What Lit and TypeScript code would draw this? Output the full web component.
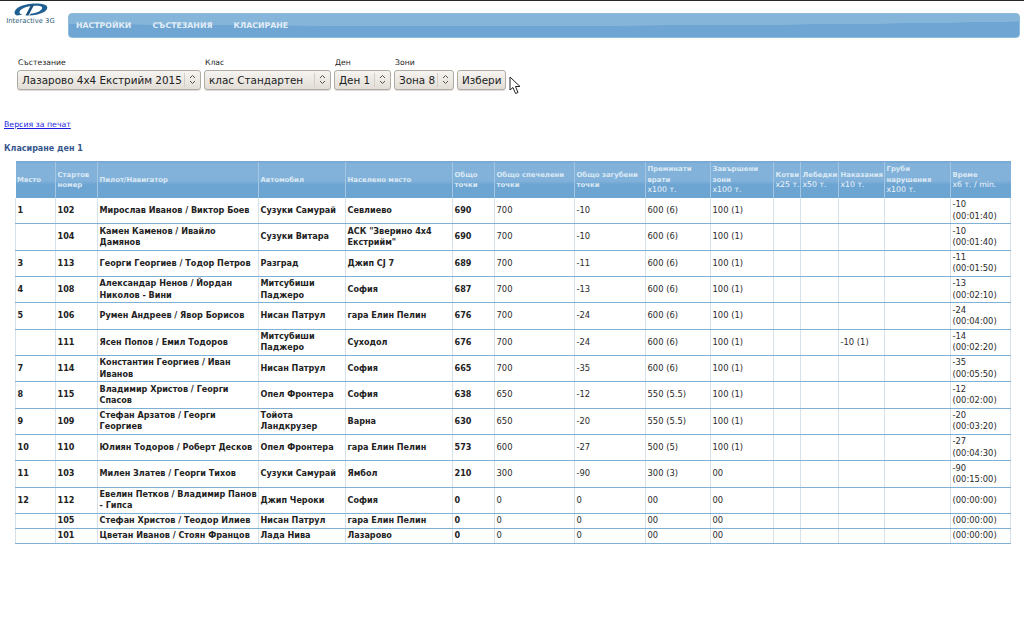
import { LitElement, html, css, svg } from "lit";
import { customElement } from "lit/decorators.js";

type Row = [string, string, string, string, string, string, string, string, string, string, string, string, string, string, string];

const rows: Row[] = [
  ["1", "102", "Мирослав Иванов / Виктор Боев", "Сузуки Самурай", "Севлиево", "690", "700", "-10", "600 (6)", "100 (1)", "", "", "", "", "-10 (00:01:40)"],
  ["", "104", "Камен Каменов / Ивайло Дамянов", "Сузуки Витара", 'АСК "Зверино 4х4 Екстрийм"', "690", "700", "-10", "600 (6)", "100 (1)", "", "", "", "", "-10 (00:01:40)"],
  ["3", "113", "Георги Георгиев / Тодор Петров", "Разград", "Джип CJ 7", "689", "700", "-11", "600 (6)", "100 (1)", "", "", "", "", "-11 (00:01:50)"],
  ["4", "108", "Александар Ненов / Йордан Николов - Вини", "Митсубиши Паджеро", "София", "687", "700", "-13", "600 (6)", "100 (1)", "", "", "", "", "-13 (00:02:10)"],
  ["5", "106", "Румен Андреев / Явор Борисов", "Нисан Патрул", "гара Елин Пелин", "676", "700", "-24", "600 (6)", "100 (1)", "", "", "", "", "-24 (00:04:00)"],
  ["", "111", "Ясен Попов / Емил Тодоров", "Митсубиши Паджеро", "Суходол", "676", "700", "-24", "600 (6)", "100 (1)", "", "", "-10 (1)", "", "-14 (00:02:20)"],
  ["7", "114", "Константин Георгиев / Иван Иванов", "Нисан Патрул", "София", "665", "700", "-35", "600 (6)", "100 (1)", "", "", "", "", "-35 (00:05:50)"],
  ["8", "115", "Владимир Христов / Георги Спасов", "Опел Фронтера", "София", "638", "650", "-12", "550 (5.5)", "100 (1)", "", "", "", "", "-12 (00:02:00)"],
  ["9", "109", "Стефан Арзатов / Георги Георгиев", "Тойота Ландкрузер", "Варна", "630", "650", "-20", "550 (5.5)", "100 (1)", "", "", "", "", "-20 (00:03:20)"],
  ["10", "110", "Юлиян Тодоров / Роберт Десков", "Опел Фронтера", "гара Елин Пелин", "573", "600", "-27", "500 (5)", "100 (1)", "", "", "", "", "-27 (00:04:30)"],
  ["11", "103", "Милен Златев / Георги Тихов", "Сузуки Самурай", "Ямбол", "210", "300", "-90", "300 (3)", "00", "", "", "", "", "-90 (00:15:00)"],
  ["12", "112", "Евелин Петков / Владимир Панов - Гипса", "Джип Чероки", "София", "0", "0", "0", "00", "00", "", "", "", "", "(00:00:00)"],
  ["", "105", "Стефан Христов / Теодор Илиев", "Нисан Патрул", "гара Елин Пелин", "0", "0", "0", "00", "00", "", "", "", "", "(00:00:00)"],
  ["", "101", "Цветан Иванов / Стоян Францов", "Лада Нива", "Лазарово", "0", "0", "0", "00", "00", "", "", "", "", "(00:00:00)"],
];

const widths = [40, 42, 161, 87, 107, 42, 80, 71, 65, 63, 27, 38, 46, 66, 60];

const heads: [string, string?][] = [
  ["Място"],
  ["Стартов номер"],
  ["Пилот/Навигатор"],
  ["Автомобил"],
  ["Населено място"],
  ["Общо точки"],
  ["Общо спечелени точки"],
  ["Общо загубени точки"],
  ["Преминати врати", "x100 т."],
  ["Завършени зони", "x100 т."],
  ["Котви", "x25 т."],
  ["Лебедки", "x50 т."],
  ["Наказания", "x10 т."],
  ["Груби нарушения", "x100 т."],
  ["Време", "x6 т. / min."],
];

const chevrons = svg`<svg class="chev" width="7" height="11" viewBox="0 0 7 11" fill="none" stroke="#55534e" stroke-width="1"><path d="M1 4 L3.5 1.5 L6 4"/><path d="M1 7 L3.5 9.5 L6 7"/></svg>`;

@customElement("app-root")
export class AppRoot extends LitElement {
  static styles = css`
    :host {
      display: block;
      width: 1024px;
      height: 640px;
      background: #fff;
      font-family: "DejaVu Sans", Verdana, sans-serif;
      position: relative;
      overflow: hidden;
      border-top: 1px solid #23282b;
      box-sizing: border-box;
    }
    .top {
      display: flex;
      align-items: flex-start;
      height: 37px;
    }
    .logo {
      width: 61px;
      margin-right: 7px;
      height: 30px;
      flex: none;
      display: flex;
      flex-direction: column;
      align-items: center;
    }
    .logo svg {
      display: block;
      margin-top: 2px;
    }
    .logo span {
      font-size: 6.8px;
      line-height: 9px;
      color: #2c5a7a;
      white-space: nowrap;
      margin-top: 1px;
    }
    .nav {
      margin-top: 12px;
      flex: 1;
      margin-right: 4px;
      height: 25px;
      box-sizing: border-box;
      border: 1px solid #8fbbdc;
      border-radius: 4px;
      background:
        radial-gradient(ellipse 75% 12px at 42% 0, #86b5da 0 98%, transparent 100%),
        #6ea5d2;
      display: flex;
      align-items: center;
      gap: 21px;
      padding-left: 7px;
    }
    .nav a {
      color: #e3eef7;
      font-size: 7.8px;
      font-weight: 700;
      text-decoration: none;
    }
    .filters {
      display: flex;
      gap: 3px;
      margin: 20px 0 0 17px;
    }
    .field {
      display: flex;
      flex-direction: column;
      gap: 2px;
    }
    label {
      font-size: 7.7px;
      line-height: 10px;
      color: #222;
      padding-left: 1px;
    }
    .sel {
      position: relative;
      height: 20px;
      display: block;
    }
    select,
    button {
      appearance: none;
      height: 20px;
      box-sizing: border-box;
      margin: 0;
      border: 1px solid #b0aca3;
      border-radius: 3px;
      background: linear-gradient(#f6f4f1, #e2ddd6);
      box-shadow: 0 1px 0 #dedcd8;
      color: #222;
      font-family: "DejaVu Sans", Verdana, sans-serif;
      font-size: 10.4px;
      display: block;
    }
    select {
      padding: 0 0 0 4px;
      width: 100%;
    }
    button {
      padding: 0 4px;
      width: 49px;
    }
    .sep {
      position: absolute;
      top: 3px;
      bottom: 3px;
      right: 16px;
      width: 1px;
      background: #d3cfc8;
    }
    .chev {
      position: absolute;
      right: 5px;
      top: 4px;
    }
    .btnwrap {
      align-self: flex-end;
    }
    .print {
      display: block;
      margin: 29px 0 0 4px;
      font-size: 7.8px;
      line-height: 11px;
      color: #1a1ae0;
      width: max-content;
    }
    h2 {
      margin: 13px 0 0 4px;
      font-size: 8px;
      line-height: 11px;
      font-weight: 700;
      color: #37578c;
    }
    table {
      border-collapse: collapse;
      table-layout: fixed;
      width: 995px;
      margin: 7px 0 0 15px;
      font-size: 8.4px;
      line-height: 11.36px;
      color: #222;
    }
    th {
      height: 36.5px;
      box-sizing: border-box;
      padding: 0 1.5px;
      text-align: left;
      vertical-align: middle;
      font-size: 6.9px;
      line-height: 10.5px;
      font-weight: 700;
      color: #dbe9f4;
      background: linear-gradient(#82b2da 0, #82b2da 50%, #6ca4d2 62%, #6ca4d2 100%);
      border-left: 1px solid #a5c6e2;
      border-top: 1px solid #79aad4;
    }
    th:first-child {
      border-left: 0;
    }
    th small {
      display: block;
      font-size: 7.8px;
      font-weight: 400;
      color: #f0f6fb;
      white-space: nowrap;
    }
    td {
      padding: 1.32px 0 1.32px 1.5px;
      border: 1px solid #d6e2ea;
      border-top: 0;
      border-bottom: 1px solid #7fb0d6;
      vertical-align: middle;
      color: #2a2a2a;
    }
    td.b {
      font-weight: 700;
      font-size: 8.1px;
      color: #222;
    }
    .cursor {
      position: absolute;
      left: 509px;
      top: 75px;
    }
  `;

  private sel(label: string, value: string, width: number) {
    return html`<div class="field">
      <label>${label}</label>
      <span class="sel" style="width:${width}px">
        <select aria-label=${label}><option>${value}</option></select>
        <span class="sep"></span>
        ${chevrons}
      </span>
    </div>`;
  }

  render() {
    return html`
      <div class="top">
        <div class="logo">
          <svg width="36" height="13" viewBox="0 0 36 13">
            <path d="M4 12.5 C0 11 1 7 6 4 C12 0.5 25 -0.5 31 1.5 C36 3 35 7 30 9.5 C26 11.5 21 12.5 16 12.5 L18 10.5 C23 10.5 28 8 29 5.5 C30 3 25 2.5 19 3 C13 3.5 7 6 6.5 9 C6.3 10.5 8 11.5 10 11.5 Z" fill="#1f5f92"/>
            <path d="M18 2 L21 2 L15.5 12.5 L12.5 12.5 Z" fill="#1b4f7c"/>
          </svg>
          <span>Interactive 3G</span>
        </div>
        <nav class="nav">
          <a href="#">НАСТРОЙКИ</a>
          <a href="#">СЪСТЕЗАНИЯ</a>
          <a href="#">КЛАСИРАНЕ</a>
        </nav>
      </div>
      <div class="filters">
        ${this.sel("Състезание", "Лазарово 4х4 Екстрийм 2015", 184)}
        ${this.sel("Клас", "клас Стандартен", 127)}
        ${this.sel("Ден", "Ден 1", 57)}
        ${this.sel("Зони", "Зона 8", 60)}
        <div class="btnwrap"><button>Избери</button></div>
      </div>
      <a class="print" href="#">Версия за печат</a>
      <h2>Класиране ден 1</h2>
      <table>
        <colgroup>${widths.map((w) => html`<col style="width:${w}px" />`)}</colgroup>
        <thead>
          <tr>
            ${heads.map(([a, b]) => html`<th>${a}${b ? html`<small>${b}</small>` : ""}</th>`)}
          </tr>
        </thead>
        <tbody>
          ${rows.map(
            (r) => html`<tr>
              ${r.map((c, i) => html`<td class=${i < 6 ? "b" : ""}>${c}</td>`)}
            </tr>`
          )}
        </tbody>
      </table>
      <svg class="cursor" width="12" height="19" viewBox="0 0 12 19">
        <path d="M1 1 L1 14 L4 11.5 L6.5 17.5 L9 16.5 L6.5 10.5 L11 10.5 Z" fill="#fff" stroke="#222" stroke-width="1"/>
      </svg>
    `;
  }
}
